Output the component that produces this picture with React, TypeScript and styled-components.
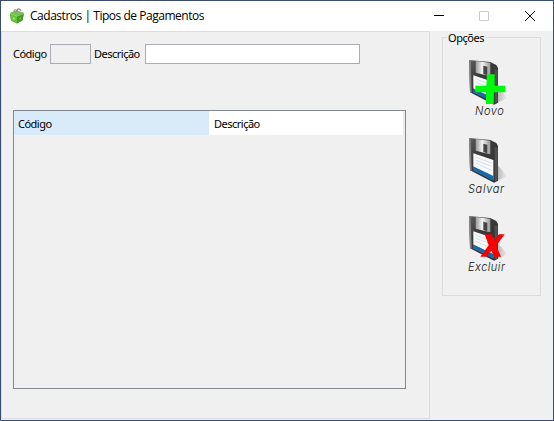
import React from "react";
import styled, { createGlobalStyle } from "styled-components";

const GlobalStyle = createGlobalStyle`
  * { box-sizing: border-box; }
  body { margin: 0; background: #f0f0f0; }
`;

const Window = styled.div`
  width: 554px;
  height: 421px;
  display: flex;
  flex-direction: column;
  border: 1px solid #3c4b70;
  background: #f0f0f0;
  color: #000;
  font: 11px/14px "Noto Sans", sans-serif;
`;

const TitleBar = styled.header`
  display: flex;
  align-items: center;
  flex: 0 0 30px;
  height: 30px;
  padding-left: 8px;
  background: #fff;
`;

const Title = styled.h1`
  flex: 1;
  margin: 0 0 0 4px;
  font: 400 12px/18px "Open Sans", sans-serif;
  letter-spacing: -0.47px;
  white-space: nowrap;
`;

const WindowButton = styled.button<{ $inset?: number }>`
  display: flex;
  align-items: center;
  justify-content: center;
  width: 46px;
  height: 28px;
  padding: 0 0 0 ${(p) => p.$inset ?? 0}px;
  border: 0;
  background: transparent;
`;

const Body = styled.main`
  display: flex;
  flex: 1;
  min-height: 0;
`;

const FormPanel = styled.section`
  width: 429px;
  height: 388px;
  padding: 12px 0 0 10px;
  border: 1px solid #dcdcdc;
`;

const FieldRow = styled.div`
  display: flex;
  align-items: center;
  height: 20px;
`;

const Label = styled.label<{ $width: number; $indent?: number }>`
  width: ${(p) => p.$width}px;
  padding-left: ${(p) => p.$indent ?? 0}px;
  letter-spacing: -0.5px;
  white-space: nowrap;
`;

const Field = styled.input<{ $width: number }>`
  width: ${(p) => p.$width}px;
  height: 20px;
  margin-right: 3px;
  padding: 0 3px;
  border: 1px solid #abadb3;
  border-radius: 0;
  background: #fff;
  font: inherit;
  &:disabled { background: #f0f0f0; }
`;

const Grid = styled.div`
  width: 393px;
  height: 279px;
  margin: 46px 0 0 1px;
  border: 1px solid #828790;
`;

const GridHeader = styled.div`
  display: flex;
  width: 390px;
  height: 24px;
  border-right: 1px solid #e9e9e9;
  background: #fff;
`;

const HeaderCell = styled.div<{ $selected?: boolean }>`
  width: ${(p) => (p.$selected ? 195 : 193)}px;
  padding: 6px 0 0 ${(p) => (p.$selected ? 4 : 5)}px;
  background: ${(p) => (p.$selected ? "#d9ebf9" : "#fff")};
  letter-spacing: -0.5px;
`;

const Options = styled.fieldset`
  display: flex;
  flex-direction: column;
  width: 99px;
  height: 266px;
  min-width: 0;
  margin: -1px 0 0 12px;
  padding: 4px 0 0 25px;
  border: 1px solid #dcdcdc;
`;

const Legend = styled.legend`
  margin-left: -21px;
  padding: 1px 2px 0 1px;
  line-height: 14px;
  letter-spacing: -0.45px;
`;

const Action = styled.button`
  display: block;
  flex: 0 0 78px;
  width: 44px;
  padding: 0;
  border: 0;
  background: transparent;
  text-align: left;
`;

const Caption = styled.span<{ $indent: number; $spacing: number }>`
  display: block;
  margin: -4px 0 0 ${(p) => p.$indent}px;
  color: #111;
  font: italic 300 11px/13px "Inter", sans-serif;
  letter-spacing: ${(p) => p.$spacing}px;
  white-space: nowrap;
`;

const BoxIcon = () => (
  <svg width="17" height="16" viewBox="0 0 17 16">
    <path d="M1 5l7-2 7 2-1.500 7L8 15.500 2 12.500z" fill="#4fa72d" />
    <path d="M1 5l7-2.500L15 5 8 7.500z" fill="#7bbd5d" />
    <path d="M1 5l7 2.500v8l-6-3z" fill="#66c13a" />
    <path d="M8 7.500L15 5l-1.500 7.500-5.500 3z" fill="#429b24" />
    <path d="M1 5.500l7 2.500 7-2.500" fill="none" stroke="#9bdd68" strokeWidth=".8" />
    <path d="M5 4c0-3 3-3 3 0 0-4 3-4 4-1" fill="none" stroke="#87918a" strokeWidth="1.100" />
    <path d="M4 9l2 1v2l-2-1z" fill="#a5e681" />
    <path d="M10 10l2-1v2l-2 1z" fill="#70bd4e" />
  </svg>
);

type Badge = "plus" | "cross";

const DiskIcon = ({ badge }: { badge?: Badge }) => (
  <svg width="44" height="47" viewBox="0 0 132 141">
    <defs>
      <linearGradient id="body" x1="0" y1="0" x2="1" y2="1">
        <stop offset="0" stopColor="#606060" />
        <stop offset=".3" stopColor="#3c3c3c" />
        <stop offset="1" stopColor="#303030" />
      </linearGradient>
      <linearGradient id="metal">
        <stop offset="0" stopColor="#999" />
        <stop offset=".45" stopColor="#f4f4f4" />
        <stop offset="1" stopColor="#999" />
      </linearGradient>
      <linearGradient id="shade">
        <stop offset="0" stopColor="#b2b2b2" />
        <stop offset="1" stopColor="#f0f0f0" />
      </linearGradient>
    </defs>
    <path d="M88 83l30 34-32 16z" fill="url(#shade)" />
    <path d="M3 3l64 6 18 9 5 9v104l-12 6L6 100z" fill="url(#body)" />
    <path d="M80 30l9 4v95l-9 5z" fill="#505050" />
    <path d="M3 3l5 2 3 96-5-1z" fill="#858585" />
    <path d="M23 6l44 5v41L23 41z" fill="url(#metal)" />
    <path d="M46 20l12 3v26l-12-4z" fill="#454545" />
    <path d="M16 49l60 20v60l-60-30z" fill="#f7f9fa" />
    <path d="M15 88l61 29v14l-61-32z" fill="#1769a8" />
    <path d="M22 60l49 18M22 69l49 19M22 78l49 22" stroke="#c2d3dc" strokeWidth="2" />
    {badge === "plus" && (
      <path d="M57 46h23v34h32v20H77v35H54v-35H22V80h33z" fill="#00fa0b" />
    )}
    {badge === "cross" && (
      <path d="M50 58h21l7 17 15-17h17L85 92l14 33H78l-8-18-15 18H37l25-34z" fill="#f80000" />
    )}
  </svg>
);

export default function App() {
  return (
    <>
      <GlobalStyle />
      <Window>
        <TitleBar>
          <BoxIcon />
          <Title>Cadastros | Tipos de Pagamentos</Title>
          <WindowButton aria-label="Minimizar" $inset={2}>
            <svg width="10" height="10"><path d="M0 4.500h10" stroke="#000" /></svg>
          </WindowButton>
          <WindowButton aria-label="Maximizar" disabled>
            <svg width="10" height="10"><path d="M.5.5h9v9h-9z" fill="none" stroke="#ccc" /></svg>
          </WindowButton>
          <WindowButton aria-label="Fechar">
            <svg width="10" height="10"><path d="M0 0l10 10M10 0L0 10" stroke="#000" /></svg>
          </WindowButton>
        </TitleBar>
        <Body>
          <FormPanel>
            <FieldRow>
              <Label htmlFor="codigo" $width={38} $indent={1}>Código</Label>
              <Field id="codigo" $width={41} disabled />
              <Label htmlFor="descricao" $width={51}>Descrição</Label>
              <Field id="descricao" $width={215} />
            </FieldRow>
            <Grid>
              <GridHeader>
                <HeaderCell $selected>Código</HeaderCell>
                <HeaderCell>Descrição</HeaderCell>
              </GridHeader>
            </Grid>
          </FormPanel>
          <Options>
            <Legend>Opções</Legend>
            <Action>
              <DiskIcon badge="plus" />
              <Caption $indent={7} $spacing={0.6}>Novo</Caption>
            </Action>
            <Action>
              <DiskIcon />
              <Caption $indent={0} $spacing={0.65}>Salvar</Caption>
            </Action>
            <Action>
              <DiskIcon badge="cross" />
              <Caption $indent={0} $spacing={0.5}>Excluir</Caption>
            </Action>
          </Options>
        </Body>
      </Window>
    </>
  );
}
